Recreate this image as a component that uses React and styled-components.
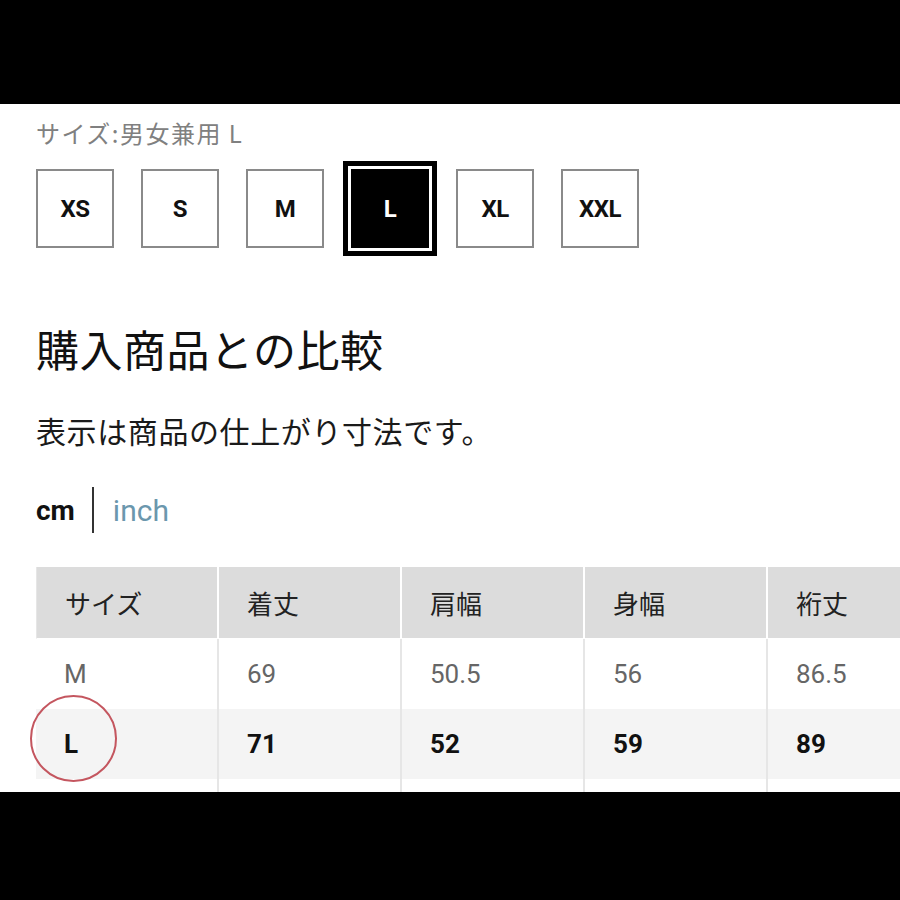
import React from 'react';
import styled, { createGlobalStyle } from 'styled-components';

const GlobalStyle = createGlobalStyle`
  html, body {
    margin: 0;
    padding: 0;
    background: #000;
  }
  body {
    font-family: Roboto, "Noto Sans CJK JP", sans-serif;
  }
`;

const Screen = styled.div`
  width: 900px;
  height: 900px;
  background: #000;
  padding-top: 104px;
  box-sizing: border-box;
  overflow: hidden;
`;

const Panel = styled.div`
  height: 688px;
  background: #fff;
  padding: 14px 0 0 36px;
  box-sizing: border-box;
  overflow: hidden;
  position: relative;
`;

const SizeLabel = styled.div`
  font-family: "Noto Sans CJK JP", sans-serif;
  font-weight: 400;
  font-size: 24px;
  line-height: 30px;
  color: #808080;
  letter-spacing: 1.5px;
`;

const SizeRow = styled.div`
  display: flex;
  gap: 27px;
  margin-top: 21px;
`;

const SizeBox = styled.div`
  width: 78px;
  height: 79px;
  box-sizing: border-box;
  border: 2px solid ${p => (p.$active ? '#000' : '#8a8a8a')};
  background: ${p => (p.$active ? '#000' : '#fff')};
  color: ${p => (p.$active ? '#fff' : '#111')};
  box-shadow: ${p => (p.$active ? '0 0 0 3px #fff, 0 0 0 8px #000' : 'none')};
  display: flex;
  align-items: center;
  justify-content: center;
  font-family: Roboto, sans-serif;
  font-weight: 700;
  font-size: 24px;
  letter-spacing: -0.5px;
`;

const Heading = styled.h2`
  margin: 75px 0 0;
  font-family: "Noto Sans CJK JP", sans-serif;
  font-weight: 400;
  font-size: 43px;
  line-height: 50px;
  letter-spacing: 0.5px;
  color: #111;
`;

const Note = styled.p`
  margin: 37px 0 0;
  font-family: "Noto Sans CJK JP", sans-serif;
  font-size: 30px;
  line-height: 40px;
  letter-spacing: 0.6px;
  color: #1a1a1a;
`;

const UnitRow = styled.div`
  display: flex;
  align-items: center;
  height: 46px;
  margin-top: 37px;
`;

const Unit = styled.span`
  font-family: Roboto, sans-serif;
  font-size: ${p => (p.$active ? '28px' : '30px')};
  font-weight: ${p => (p.$active ? 700 : 400)};
  color: ${p => (p.$active ? '#111' : '#6b97ad')};
`;

const Divider = styled.span`
  width: 2px;
  height: 46px;
  background: #333;
  margin: 0 19px 0 17px;
`;

const TableWrap = styled.div`
  margin-top: 34px;
  position: relative;
`;

const Table = styled.div`
  display: grid;
  grid-template-columns: 183px 183px 183px 183px 140px;
`;

const Cell = styled.div`
  height: ${p => (p.$head ? '72px' : '70px')};
  box-sizing: border-box;
  display: flex;
  align-items: center;
  padding-left: 28px;
  font-family: ${p => (p.$head ? '"Noto Sans CJK JP", sans-serif' : 'Roboto, sans-serif')};
  font-size: 26px;
  font-weight: ${p => (p.$bold ? 700 : 400)};
  color: ${p => (p.$head ? '#222' : p.$bold ? '#111' : '#666')};
  background: ${p => (p.$head ? '#dcdcdc' : p.$shade ? '#f4f4f4' : '#fff')};
  border-right: 2px solid ${p => (p.$head ? '#fff' : '#e6e6e6')};
  border-bottom: ${p => (p.$head ? '1px solid #fff' : 'none')};
  &:first-child {
    border-left: 1px solid #e6e6e6;
  }
`;

const Circle = styled.div`
  position: absolute;
  left: -6px;
  top: 128px;
  width: 87px;
  height: 87px;
  box-sizing: border-box;
  border: 2px solid #c4565f;
  border-radius: 50%;
  pointer-events: none;
`;

const sizes = ['XS', 'S', 'M', 'L', 'XL', 'XXL'];
const headers = ['サイズ', '着丈', '肩幅', '身幅', '裄丈'];
const rows = [
  { cells: ['M', '69', '50.5', '56', '86.5'] },
  { cells: ['L', '71', '52', '59', '89'], bold: true, shade: true },
  { cells: ['', '', '', '', ''] },
];

export default function App() {
  return (
    <Screen>
      <GlobalStyle />
      <Panel>
        <SizeLabel>サイズ:男女兼用 L</SizeLabel>
        <SizeRow>
          {sizes.map(s => (
            <SizeBox key={s} $active={s === 'L'}>{s}</SizeBox>
          ))}
        </SizeRow>
        <Heading>購入商品との比較</Heading>
        <Note>表示は商品の仕上がり寸法です。</Note>
        <UnitRow>
          <Unit $active>cm</Unit>
          <Divider />
          <Unit>inch</Unit>
        </UnitRow>
        <TableWrap>
          <Table>
            {headers.map(h => (
              <Cell key={h} $head>{h}</Cell>
            ))}
            {rows.map((r, i) =>
              r.cells.map((c, j) => (
                <Cell key={i + '-' + j} $bold={r.bold} $shade={r.shade}>{c}</Cell>
              ))
            )}
          </Table>
          <Circle />
        </TableWrap>
      </Panel>
    </Screen>
  );
}
